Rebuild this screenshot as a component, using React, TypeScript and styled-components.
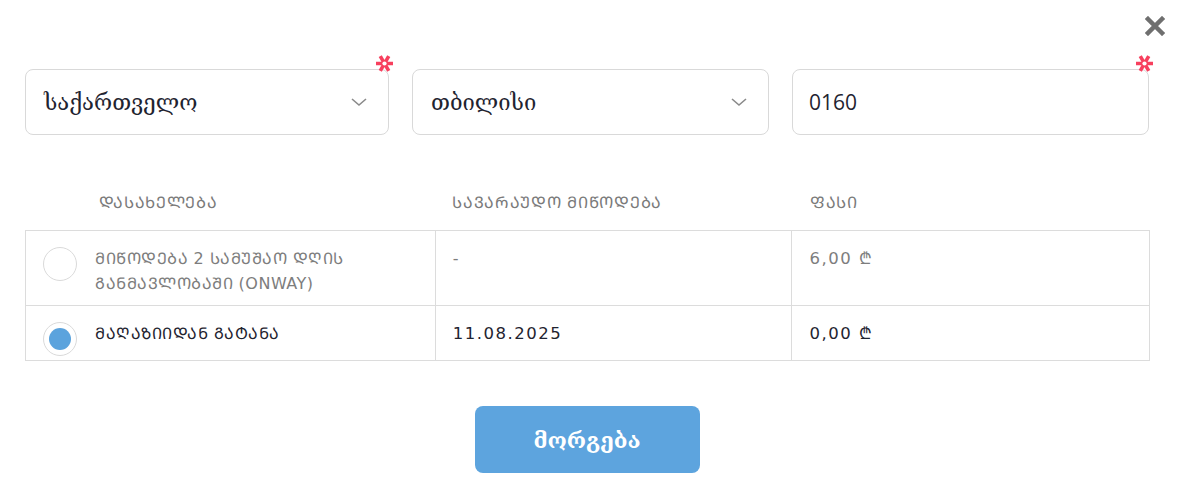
import React from "react";
import styled, { createGlobalStyle } from "styled-components";

const Global = createGlobalStyle`
  html, body { margin: 0; padding: 0; background: #fff; }
  body { font-family: "DejaVu Sans", "Noto Sans", sans-serif; color: #222; }
`;

const Modal = styled.div`
  position: relative;
  width: 1177px;
  height: 492px;
  box-sizing: border-box;
  padding: 69px 28px 0 25px;
  background: #fff;
`;

const Close = styled.button`
  position: absolute;
  top: 14px;
  right: 10px;
  width: 24px;
  height: 24px;
  border: 0;
  padding: 0;
  background: transparent;
  cursor: pointer;
  display: flex;
  align-items: center;
  justify-content: center;
`;

const Fields = styled.div`
  display: grid;
  grid-template-columns: 364px 357px 357px;
  column-gap: 23px;
`;

const Field = styled.div<{ $pad?: number }>`
  position: relative;
  height: 66px;
  box-sizing: border-box;
  border: 1px solid #d9d9d9;
  border-radius: 8px;
  display: flex;
  align-items: center;
  padding: 0 20px 0 ${(p) => p.$pad ?? 18}px;
`;

const FieldText = styled.span<{ $mono?: boolean }>`
  flex: 1;
  font-family: ${(p) => (p.$mono ? '"Open Sans", "Noto Sans", sans-serif' : '"DejaVu Serif", "DejaVu Sans", serif')};
  font-size: ${(p) => (p.$mono ? 21 : 22)}px;
  color: #1f2430;
`;

const Required = styled.span`
  position: absolute;
  top: -16px;
  right: -6px;
  width: 19px;
  height: 19px;
  display: block;
`;

const Table = styled.table`
  margin-top: 53px;
  width: 1125px;
  border-collapse: collapse;
  font-family: "DejaVu Sans", sans-serif;
`;

const Th = styled.th<{ $pl: number }>`
  text-align: left;
  font-weight: normal;
  font-size: 16px;
  color: #7a7a7a;
  padding: 0 0 14px ${(p) => p.$pl}px;
  height: 28px;
  letter-spacing: 0.7px;
`;

const Td = styled.td<{ $h: number; $strong?: boolean }>`
  border: 1px solid #dcdcdc;
  vertical-align: top;
  height: ${(p) => p.$h}px;
  box-sizing: border-box;
  padding: 15px 17px 0 17px;
  font-size: 16px;
  line-height: 25px;
  color: ${(p) => (p.$strong ? "#1f2430" : "#7d7d7d")};
  letter-spacing: 0.5px;
`;

const Num = styled.span`
  font-size: 16.5px;
  letter-spacing: 1.5px;
`;

const NameCell = styled.div`
  display: flex;
  align-items: flex-start;
  gap: 18px;
`;

const Radio = styled.span<{ $on?: boolean }>`
  flex: none;
  width: 34px;
  height: 34px;
  margin-top: 1px;
  box-sizing: border-box;
  border: 1px solid #dadada;
  border-radius: 50%;
  display: flex;
  align-items: center;
  justify-content: center;
  background: #fff;
  &::after {
    content: "";
    width: 22px;
    height: 22px;
    border-radius: 50%;
    background: ${(p) => (p.$on ? "#5ba3dd" : "transparent")};
  }
`;

const Footer = styled.div`
  display: flex;
  justify-content: center;
  margin-top: 45px;
`;

const Button = styled.button`
  width: 225px;
  height: 67px;
  border: 0;
  border-radius: 8px;
  background: #5da4de;
  color: #fff;
  font-family: "DejaVu Serif", "DejaVu Sans", serif;
  font-weight: bold;
  font-size: 22px;
`;

const Asterisk = () => (
  <svg width="19" height="19" viewBox="0 0 19 19">
    <g stroke="#f7405e" strokeWidth="3.6">
      <path d="M1 9.5 H18 M5.25 2.14 L13.75 16.86 M13.75 2.14 L5.25 16.86" />
    </g>
    <circle cx="9.5" cy="9.5" r="2.1" fill="#fff" />
  </svg>
);

const Chevron = () => (
  <svg width="18" height="12" viewBox="0 0 18 12">
    <path d="M2 3 L9 9 L16 3" fill="none" stroke="#8a8a8a" strokeWidth="1.6" />
  </svg>
);

export default function App() {
  return (
    <>
      <Global />
      <Modal>
        <Close aria-label="close">
          <svg width="20" height="20" viewBox="0 0 20 20">
            <path d="M3 3 L17 17 M17 3 L3 17" stroke="#6f6f6f" strokeWidth="4.5" strokeLinecap="square" />
          </svg>
        </Close>
        <Fields>
          <Field>
            <FieldText>საქართველო</FieldText>
            <Chevron />
            <Required><Asterisk /></Required>
          </Field>
          <Field>
            <FieldText>თბილისი</FieldText>
            <Chevron />
          </Field>
          <Field $pad={16}>
            <FieldText $mono>0160</FieldText>
            <Required><Asterisk /></Required>
          </Field>
        </Fields>
        <Table>
          <colgroup>
            <col style={{ width: 410 }} />
            <col style={{ width: 357 }} />
            <col style={{ width: 358 }} />
          </colgroup>
          <thead>
            <tr>
              <Th $pl={73}>ᲓᲐᲡᲐᲮᲔᲚᲔᲑᲐ</Th>
              <Th $pl={17}>ᲡᲐᲕᲐᲠᲐᲣᲓᲝ ᲛᲘᲬᲝᲓᲔᲑᲐ</Th>
              <Th $pl={18}>ᲤᲐᲡᲘ</Th>
            </tr>
          </thead>
          <tbody>
            <tr>
              <Td $h={75}>
                <NameCell>
                  <Radio />
                  <span>ᲛᲘᲬᲝᲓᲔᲑᲐ 2 ᲡᲐᲛᲣᲨᲐᲝ ᲓᲦᲘᲡ<br />ᲒᲐᲜᲛᲐᲕᲚᲝᲑᲐᲨᲘ (ONWAY)</span>
                </NameCell>
              </Td>
              <Td $h={75}>-</Td>
              <Td $h={75}><Num>6,00 ₾</Num></Td>
            </tr>
            <tr>
              <Td $h={55} $strong>
                <NameCell>
                  <Radio $on />
                  <span>ᲛᲐᲦᲐᲖᲘᲘᲓᲐᲜ ᲒᲐᲢᲐᲜᲐ</span>
                </NameCell>
              </Td>
              <Td $h={55} $strong><Num>11.08.2025</Num></Td>
              <Td $h={55} $strong><Num>0,00 ₾</Num></Td>
            </tr>
          </tbody>
        </Table>
        <Footer>
          <Button>მორგება</Button>
        </Footer>
      </Modal>
    </>
  );
}
